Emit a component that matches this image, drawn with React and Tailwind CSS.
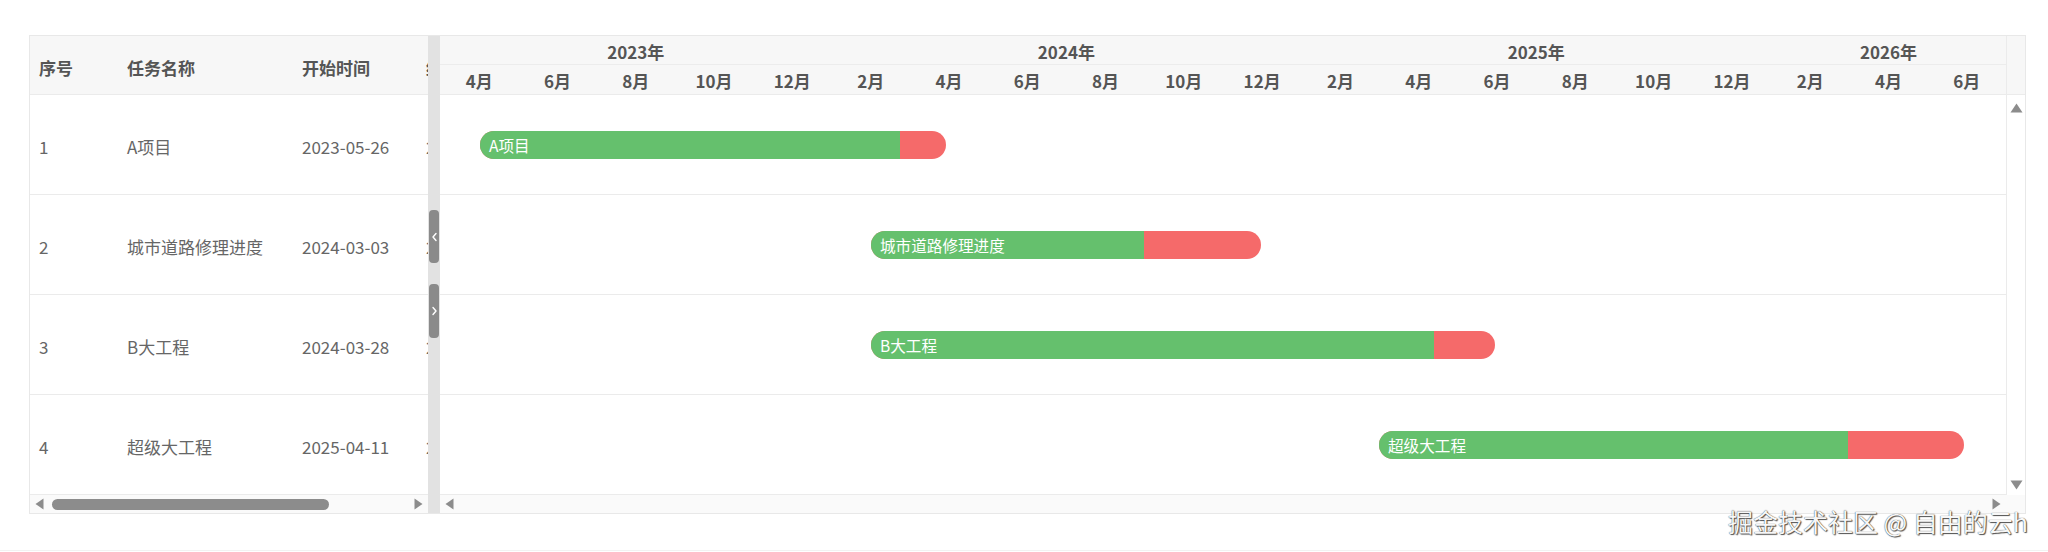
import React from "react";

const months = [
  "4月", "6月", "8月", "10月", "12月",
  "2月", "4月", "6月", "8月", "10月", "12月",
  "2月", "4月", "6月", "8月", "10月", "12月",
  "2月", "4月", "6月",
];

const years = [
  { label: "2023年", span: "col-span-5" },
  { label: "2024年", span: "col-span-6" },
  { label: "2025年", span: "col-span-6" },
  { label: "2026年", span: "col-span-3" },
];

// left / total / done are pixel offsets on the timeline
const tasks = [
  { id: 1, name: "A项目", start: "2023-05-26", end: "2024-04-10", left: 40, total: 466, done: 420 },
  { id: 2, name: "城市道路修理进度", start: "2024-03-03", end: "2024-11-30", left: 431, total: 390, done: 273 },
  { id: 3, name: "B大工程", start: "2024-03-28", end: "2025-06-20", left: 431, total: 624, done: 563 },
  { id: 4, name: "超级大工程", start: "2025-04-11", end: "2026-06-18", left: 939, total: 585, done: 469 },
];

function TriLeft() {
  return (
    <svg width="9" height="12" viewBox="0 0 9 12">
      <path d="M8.5 0.5 L8.5 11.5 L0.5 6 Z" fill="#8c8c8c" />
    </svg>
  );
}
function TriRight() {
  return (
    <svg width="9" height="12" viewBox="0 0 9 12">
      <path d="M0.5 0.5 L0.5 11.5 L8.5 6 Z" fill="#8c8c8c" />
    </svg>
  );
}
function TriUp() {
  return (
    <svg width="13" height="10" viewBox="0 0 13 10">
      <path d="M0.5 9.5 L12.5 9.5 L6.5 0.5 Z" fill="#8c8c8c" />
    </svg>
  );
}
function TriDown() {
  return (
    <svg width="13" height="10" viewBox="0 0 13 10">
      <path d="M0.5 0.5 L12.5 0.5 L6.5 9.5 Z" fill="#8c8c8c" />
    </svg>
  );
}

function Chevron({ dir }) {
  return (
    <svg width="7" height="10" viewBox="0 0 7 10">
      <path
        d={dir === "left" ? "M5 1.5 L2 5 L5 8.5" : "M2 1.5 L5 5 L2 8.5"}
        stroke="#ffffff"
        strokeWidth="1.4"
        fill="none"
        strokeLinecap="round"
        strokeLinejoin="round"
      />
    </svg>
  );
}

function TaskTable() {
  return (
    <div className="w-[398px] shrink-0 flex flex-col overflow-hidden">
      {/* header */}
      <div className="h-[59px] border-b border-[#ebebeb] bg-[#f7f7f7] flex items-center pt-[5px] text-[17px] font-bold text-[#555] whitespace-nowrap">
        <div className="w-[87px] shrink-0 pl-[9px]">序号</div>
        <div className="w-[175px] shrink-0 pl-[10px]">任务名称</div>
        <div className="w-[124px] shrink-0 pl-[10px]">开始时间</div>
        <div className="w-[124px] shrink-0 pl-[10px]">结束时间</div>
      </div>
      {tasks.map((t) => (
        <div
          key={t.id}
          className="h-[100px] border-b border-[#ebebeb] flex items-center pt-[4px] text-[17px] text-[#666] whitespace-nowrap"
        >
          <div className="w-[87px] shrink-0 pl-[9px]">{t.id}</div>
          <div className="w-[175px] shrink-0 pl-[10px]">{t.name}</div>
          <div className="w-[124px] shrink-0 pl-[10px]">{t.start}</div>
          <div className="w-[124px] shrink-0 pl-[10px]">{t.end}</div>
        </div>
      ))}
      {/* horizontal scrollbar */}
      <div className="h-[18px] bg-[#fafafa] flex items-center pl-[5px] pr-[5px] gap-[8px]">
        <TriLeft />
        <div className="w-[277px] h-[11px] rounded-full bg-[#8c8c8c]" />
        <div className="flex-1" />
        <TriRight />
      </div>
    </div>
  );
}

function Splitter() {
  return (
    <div className="w-[12px] shrink-0 bg-[#e2e2e2] flex flex-col items-center pt-[174px] gap-[21px]">
      <div className="w-[10px] h-[53px] rounded-[4px] bg-[#8a8a8a] flex items-center justify-center">
        <Chevron dir="left" />
      </div>
      <div className="w-[10px] h-[54px] rounded-[4px] bg-[#8a8a8a] flex items-center justify-center">
        <Chevron dir="right" />
      </div>
    </div>
  );
}

function Bar({ task }) {
  return (
    <div
      className="absolute top-[36px] h-[28px] rounded-full overflow-hidden flex bg-[#f56a6a]"
      style={{ left: task.left, width: task.total }}
    >
      <div className="h-full bg-[#65c06d] flex items-center" style={{ width: task.done }}>
        <span className="pl-[9px] text-[15.6px] text-white whitespace-nowrap leading-none pt-[1px]">
          {task.name}
        </span>
      </div>
    </div>
  );
}

function Gantt() {
  return (
    <div className="flex-1 flex flex-col min-w-0">
      <div className="flex">
        <div className="w-[1566px] shrink-0">
          {/* timeline header */}
          <div className="h-[59px] border-b border-[#ebebeb] bg-[#f7f7f7] text-[17px] font-bold text-[#555] whitespace-nowrap">
            <div className="h-[29px] border-b border-[#ececec] grid grid-cols-[repeat(20,minmax(0,1fr))]">
              {years.map((y) => (
                <div key={y.label} className={`${y.span} flex items-center justify-center pt-[3px]`}>
                  {y.label}
                </div>
              ))}
            </div>
            <div className="h-[30px] grid grid-cols-[repeat(20,minmax(0,1fr))]">
              {months.map((m, i) => (
                <div key={i} className="flex items-center justify-center pt-[2px]">
                  {m}
                </div>
              ))}
            </div>
          </div>
          {/* task rows */}
          {tasks.map((t) => (
            <div key={t.id} className="relative h-[100px] border-b border-[#ebebeb]">
              <Bar task={t} />
            </div>
          ))}
        </div>
        {/* vertical scrollbar */}
        <div className="w-[19px] shrink-0 flex flex-col border-l border-[#ebebeb]">
          <div className="h-[59px] bg-[#f7f7f7] border-b border-[#ebebeb]" />
          <div className="h-[400px] bg-white flex flex-col items-center justify-between pt-[8px] pb-[5px]">
            <TriUp />
            <TriDown />
          </div>
        </div>
      </div>
      {/* horizontal scrollbar */}
      <div className="h-[18px] bg-[#fafafa] flex items-center justify-between pl-[5px] pr-[24px]">
        <TriLeft />
        <TriRight />
      </div>
    </div>
  );
}

export default function App() {
  return (
    <div className="relative w-[2048px] h-[552px] bg-white overflow-hidden font-['Noto_Sans_CJK_SC',sans-serif]">
      <div className="pt-[35px] pl-[29px]">
        <div className="w-[1997px] border border-[#e8e8e8] flex">
          <TaskTable />
          <Splitter />
          <Gantt />
        </div>
      </div>
      <div className="mt-[36px] h-px bg-[#f2f2f2]" />
      <div className="absolute left-[1728px] top-[509px] text-[25px] leading-none whitespace-nowrap text-[#f7f7f7] [text-shadow:0_0_1px_#222,1px_1px_1px_#555]">
        掘金技术社区 @ 自由的云h
      </div>
    </div>
  );
}
